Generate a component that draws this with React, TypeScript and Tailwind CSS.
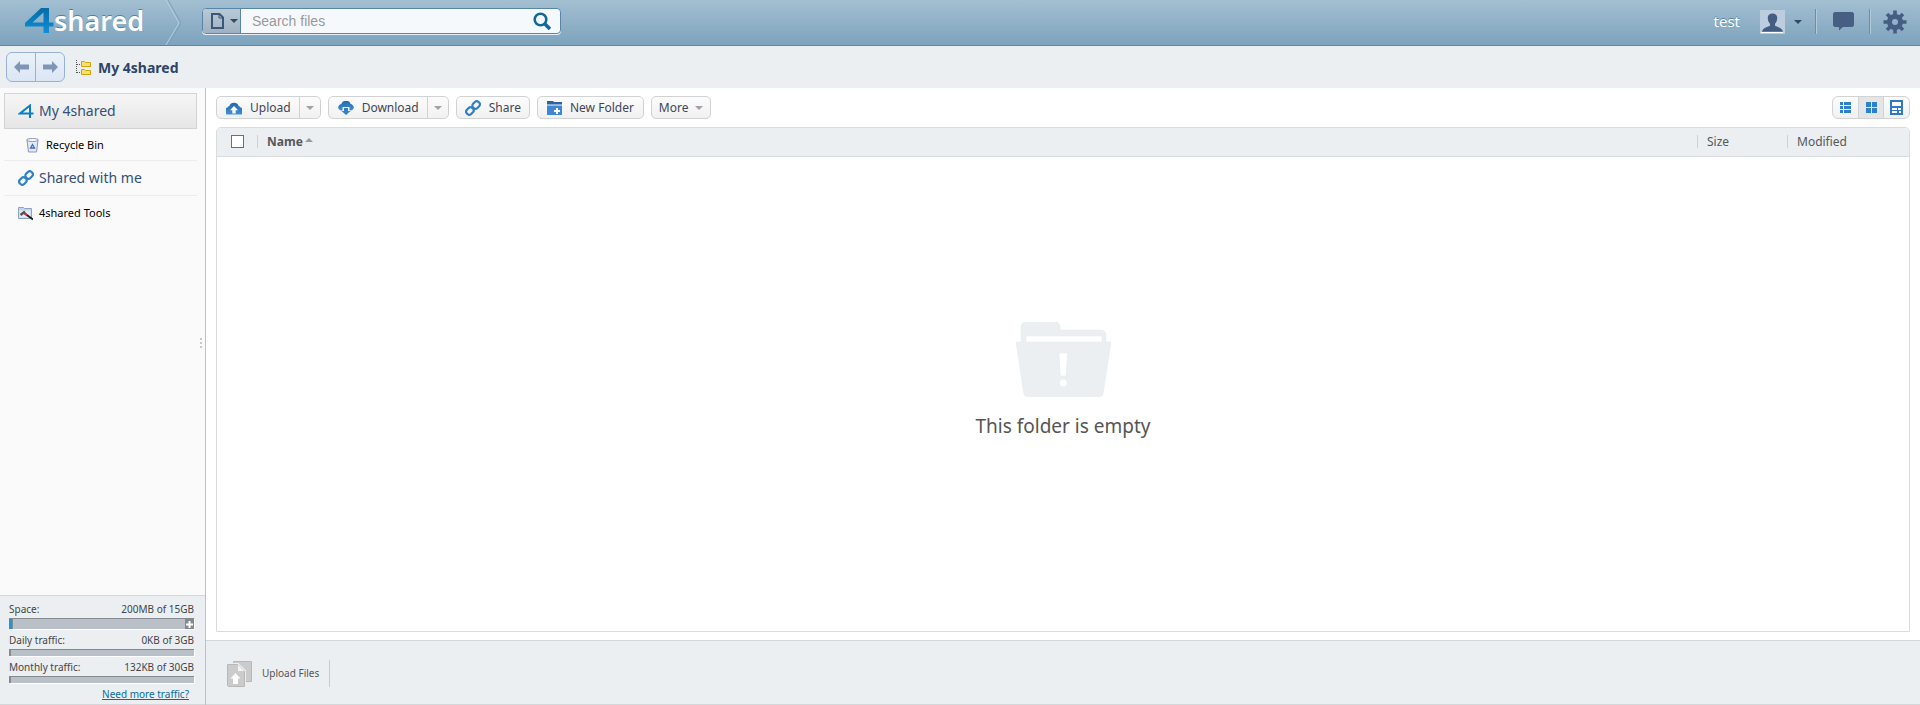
import React from "react";

const sans = "font-['Noto_Sans',sans-serif]";

function Caret({ className }: { className: string }) {
  return (
    <svg viewBox="0 0 8 4" className={className} fill="currentColor" aria-hidden="true">
      <path d="M0 0h8L4 4z" />
    </svg>
  );
}

function LinkIcon({ className }: { className: string }) {
  return (
    <svg viewBox="0 0 16 16" className={className} fill="none" stroke="#2f80c8" strokeWidth="2.200" aria-hidden="true">
      <rect x="7.300" y="2" width="7.600" height="6" rx="2.600" transform="rotate(-45 11.100 5)" />
      <rect x="1.100" y="8" width="7.600" height="6" rx="2.600" transform="rotate(-45 4.900 11)" />
    </svg>
  );
}

function CloudIcon({ down }: { down?: boolean }) {
  return (
    <svg viewBox="0 0 16 14" className="h-3.5 w-4" aria-hidden="true">
      <defs>
        <linearGradient id="cloud" x2="0" y2="1">
          <stop stopColor="#2568a8" />
          <stop offset="1" stopColor="#3d90dc" />
        </linearGradient>
      </defs>
      {down ? (
        <>
          <path fill="url(#cloud)" d="M3 9.500A3 3 0 0 1 1 4.500 2.500 2.500 0 0 1 3.300 3 5 5 0 0 1 12.700 3 2.500 2.500 0 0 1 15 4.500 3 3 0 0 1 13 9.500h-1.500V6h-7v3.500z" />
          <path fill="#3380c8" d="M6 7h4v3h2.500L8 14l-4.500-4H6z" />
        </>
      ) : (
        <>
          <path fill="url(#cloud)" d="M2.500 13.500A3.500 3.500 0 0 1 1.500 6.500 3 3 0 0 1 3.300 5 5 5 0 0 1 12.700 5a3 3 0 0 1 1.800 1.500 3.500 3.500 0 0 1-1 7z" />
          <path fill="#fff" d="m8 5 4 4.200H9.700v3.300H6.300V9.200H4z" />
        </>
      )}
    </svg>
  );
}

function NewFolderIcon() {
  return (
    <svg viewBox="0 0 15 14" className="h-3.5 w-[15px]" aria-hidden="true">
      <path fill="#2b63a3" d="M0 0h6l1 1h8v2.500H0z" />
      <path fill="#3f87d4" d="M0 4.500h15V14H0z" />
      <path fill="#fff" d="M9 7h2v2h2v2h-2v2H9v-2H7V9h2z" />
    </svg>
  );
}

const btn = "flex h-[23px] items-center rounded-[5px] border border-[#d0d2d4] bg-linear-to-b from-[#fcfcfc] to-[#f1f1f2] text-xs text-[#3c4658]";

function SplitButton({ label, icon }: { label: string; icon: React.ReactNode }) {
  return (
    <div className={btn}>
      <button className="flex h-full items-center gap-2 pr-2 pl-[9px]">
        {icon}
        {label}
      </button>
      <button aria-label={`${label} options`} className="flex h-full w-[21px] items-center justify-center border-l border-[#d0d2d4] text-[#a0a2a4]">
        <Caret className="h-1 w-2" />
      </button>
    </div>
  );
}

function Header() {
  return (
    <header className="flex h-[46px] shrink-0 items-stretch border-b border-[#5c86a6] bg-linear-to-b from-[#a3bfd2] to-[#7da3bd]">
      <a href="#" aria-label="4shared home" className="flex w-[165px] items-center pl-[25px] text-white">
        <svg viewBox="0 0 29 25" className="mb-1 h-[25px] w-[29px] shrink-0" aria-hidden="true">
          <defs>
            <linearGradient id="logo" x2="0" y2="1">
              <stop stopColor="#066ba8" />
              <stop offset="1" stopColor="#0f8fd6" />
            </linearGradient>
          </defs>
          <path fill="url(#logo)" fillRule="evenodd" d="M16 0h8v14.500h4.500v4H24V25h-5.500v-6.500H0V15zM18.500 4.500L7.500 14.500h11z" />
        </svg>
        <span className="mb-1 text-[27px] leading-8 font-semibold [text-shadow:0_-1px_0_#4f7fa3]">shared</span>
      </a>
      <svg viewBox="0 0 16 45" className="h-[45px] w-4" fill="none" aria-hidden="true">
        <path d="M1 0l13 23L1 45" stroke="#b7cedd" />
        <path d="M3 0l13 23L3 45" stroke="#7c9fb9" />
      </svg>
      <form className="mt-2 ml-[21px] flex h-[26px] w-[359px] overflow-hidden rounded border border-[#5886a8] bg-[#f6f9fc] shadow-[0_1px_0_#e8f1f7]">
        <button type="button" aria-label="File type" className="flex w-[38px] shrink-0 items-center gap-1.5 border-r border-[#5886a8] bg-linear-to-b from-[#b9cad7] to-[#9fb1c2] pl-2 text-[#34486a]">
          <svg viewBox="0 0 13 16" className="h-4 w-[13px]" fill="none" stroke="#3f5578" strokeWidth="2" aria-hidden="true">
            <path d="M1 1h7.500L12 4.500V15H1z" />
            <path d="M8 1v4h4" strokeWidth="1" />
          </svg>
          <Caret className="h-1 w-2" />
        </button>
        <input aria-label="Search files" placeholder="Search files" className="min-w-0 flex-1 bg-transparent pl-[11px] font-['Liberation_Sans',sans-serif] text-sm text-[#444] outline-none placeholder:text-[#999]" />
        <button aria-label="Search" className="flex w-9 items-center justify-center">
          <svg viewBox="0 0 18 18" className="size-[18px]" fill="none" stroke="#14699c" aria-hidden="true">
            <circle cx="7.500" cy="7.500" r="5.800" strokeWidth="2.600" />
            <path d="m12 12 5 5" strokeWidth="3.600" />
          </svg>
        </button>
      </form>
      <div className="ml-auto flex items-center pb-0.5 text-[#34486a]">
        <a href="#" className="mr-5 text-[15px] text-white [text-shadow:0_-1px_0_#5c86a6]">test</a>
        <button aria-label="Account" className="flex items-center gap-[9px]">
          <svg viewBox="0 0 25 24" className="h-6 w-[25px]" aria-hidden="true">
            <path fill="#bccddd" d="M0 0h25v24H0z" />
            <path fill="#fff" d="M1 22h22v1H1z" />
            <path fill="#455d82" d="M12.500 3.500c3.300 0 5 2 4.700 5-.2 2.500-1 4-2.200 5.300v2c3 1.500 7.200 2 8 6H2c.8-4 5-4.500 8-6v-2c-1.200-1.300-2-2.800-2.200-5.300-.3-3 1.400-5 4.700-5z" />
          </svg>
          <Caret className="h-1 w-2" />
        </button>
        <div className="mr-4 ml-[13px] h-[25px] w-0.5 border-l border-[#6890ad] bg-[#b2cbdb]" />
        <button aria-label="Messages">
          <svg viewBox="0 0 21 19" className="h-[19px] w-[21px]" aria-hidden="true">
            <path fill="#485f84" d="M1.500 0h18L21 1.500v12L19.500 15H10l-4 3.500V15H1.500L0 13.500v-12z" />
          </svg>
        </button>
        <div className="mr-3 ml-[15px] h-[25px] w-0.5 border-l border-[#6890ad] bg-[#b2cbdb]" />
        <button aria-label="Settings" className="mr-[13px]">
          <svg viewBox="-12 -12 24 24" className="size-6" stroke="#455d82" fill="none" aria-hidden="true">
            <circle r="5.500" strokeWidth="5" />
            <path strokeWidth="3.600" d="M0-7v-4.500M0 7v4.500M-7 0h-4.500M7 0h4.500M-5-5l-3-3M5 5l3 3M5-5l3-3M-5 5l-3 3" />
          </svg>
        </button>
      </div>
    </header>
  );
}

function Breadcrumb() {
  return (
    <div className="flex h-[42px] shrink-0 items-center bg-[#ebeff2] pl-1.5">
      <div className="flex h-[30px] w-[59px] rounded-md border border-[#96b2d8] bg-linear-to-b from-[#ebf1f8] to-[#dbe6f5] text-[#7f95b5]">
        {["Back", "Forward"].map((name, i) => (
          <button key={name} aria-label={name} className={i ? "flex flex-1 items-center justify-center border-l border-[#96b2d8]" : "flex flex-1 items-center justify-center"}>
            <svg viewBox="0 0 15 12" className={i ? "h-3 w-[15px] -scale-x-100" : "h-3 w-[15px]"} fill="currentColor" aria-hidden="true">
              <path d="M0 6l6-6v3.500h9v5H6V12z" />
            </svg>
          </button>
        ))}
      </div>
      <svg viewBox="0 0 15 16" className="mt-0.5 ml-[11px] h-4 w-[15px]" aria-hidden="true">
        <path d="M.5 0v13M1 4.500h4M1 12.500h4" stroke="#555" strokeDasharray="1 1" fill="none" />
        <path d="M5.500 1.500h3l1 1h5v4h-9zM5.500 9.500h3l1 1h5v4h-9z" fill="#f7df77" stroke="#d0a500" />
      </svg>
      <h1 className="mt-0.5 ml-[7px] text-sm font-bold text-[#2d4466]">My 4shared</h1>
    </div>
  );
}

function Quota({ label, value, fill, large }: { label: string; value: string; fill: string; large?: boolean }) {
  return (
    <div>
      <div className="flex h-[18px] items-center justify-between text-[10px] text-[#444]">
        <span>{label}</span>
        <span>{value}</span>
      </div>
      <div className={large ? "flex h-[11px] justify-between border-t border-[#858990] bg-[#bac0c8] shadow-[1px_1px_0_#fff]" : "h-[7px] border-t border-[#858990] bg-[#bac0c8] shadow-[1px_1px_0_#fff]"}>
        <div className={fill} />
        {large && (
          <button aria-label="Get more space" className="flex w-[9px] items-center justify-center bg-[#858990]">
            <svg viewBox="0 0 7 7" className="size-[7px] shrink-0" stroke="#fff" strokeWidth="2" aria-hidden="true">
              <path d="M3.500 0v7M0 3.500h7" />
            </svg>
          </button>
        )}
      </div>
    </div>
  );
}

function Sidebar() {
  return (
    <aside className="flex w-[206px] shrink-0 flex-col border-r border-[#b4c3d8] bg-[#fafafa]">
      <nav className="flex flex-col pt-[5px] pr-2 pl-1">
        <a href="#" className="flex h-9 items-center gap-[5px] border border-[#d2d3d5] bg-linear-to-b from-[#f6f6f6] to-[#e6e6e6] pl-[13px] text-sm text-[#344f78]">
          <svg viewBox="0 0 16 14" className="h-3.5 w-4" fill="none" stroke="#0b7fc4" strokeWidth="2" aria-hidden="true">
            <path d="M15.500 9.500H2L12 1.500V14" />
          </svg>
          My 4shared
        </a>
        <a href="#" className="flex h-8 items-center gap-[7px] border-b border-[#ececec] pt-0.5 pl-[22px] text-[11px] text-black">
          <svg viewBox="0 0 13 15" className="h-[15px] w-[13px]" aria-hidden="true">
            <path d="M1 2.500h11L10.500 14h-8z" fill="#e4eaf5" stroke="#8b97b2" />
            <ellipse cx="6.500" cy="2" rx="6" ry="1.500" fill="#f8faff" stroke="#8b97b2" />
            <path d="M6.500 6.500l2 3.500h-4z" fill="none" stroke="#3d6ec8" strokeWidth="1.300" />
          </svg>
          Recycle Bin
        </a>
        <a href="#" className="flex h-[35px] items-center gap-[5px] border-b border-[#ececec] pl-3.5 text-sm text-[#344f78]">
          <LinkIcon className="size-4" />
          Shared with me
        </a>
        <a href="#" className="flex h-[34px] items-center gap-1.5 pl-3.5 text-[11px] text-black">
          <svg viewBox="0 0 15 15" className="size-[15px]" aria-hidden="true">
            <path d="M.5 1.500h5l1 1h7v10H.5z" fill="#c2d3ea" stroke="#8da3c0" />
            <path d="M1.500 4.500h11v7h-11z" fill="#e6edf7" />
            <path d="M6 7l9 6.500" stroke="#222" strokeWidth="2" />
            <path d="M6 7l3 2" stroke="#d33" strokeWidth="2" />
            <path d="M2.500 9l4.500-3.500" stroke="#555" strokeWidth="2.500" />
          </svg>
          4shared Tools
        </a>
      </nav>
      <div className="flex flex-1 items-center justify-end pr-[3px] pb-[140px]">
        <svg viewBox="0 0 2 10" className="h-2.5 w-0.5" fill="#c4c8cc" aria-hidden="true">
          <path d="M0 0h2v2H0zM0 4h2v2H0zM0 8h2v2H0z" />
        </svg>
      </div>
      <div className="flex flex-col gap-0.5 border-y border-[#d3d7da] bg-[#ebeff2] pt-1 pr-[11px] pl-[9px]">
        <Quota large label="Space:" value="200MB of 15GB" fill="w-1 bg-[#1d96e0] border-r border-[#858990]" />
        <Quota label="Daily traffic:" value="0KB of 3GB" fill="h-full w-0.5 bg-[#858990]" />
        <Quota label="Monthly traffic:" value="132KB of 30GB" fill="h-full w-0.5 bg-[#858990]" />
        <a href="#" className="mr-[5px] self-end text-[10px] leading-[19px] text-[#0a6c9e] underline">Need more traffic?</a>
      </div>
    </aside>
  );
}

function Toolbar() {
  return (
    <div className="flex items-center gap-[7px]">
      <SplitButton label="Upload" icon={<CloudIcon />} />
      <SplitButton label="Download" icon={<CloudIcon down />} />
      <button className={`${btn} gap-2 px-2`}>
        <LinkIcon className="size-4" />
        Share
      </button>
      <button className={`${btn} gap-2 px-[9px]`}>
        <NewFolderIcon />
        New Folder
      </button>
      <button className={`${btn} gap-1.5 px-[7px]`}>
        More
        <Caret className="h-1 w-2 text-[#a0a2a4]" />
      </button>
      <div className="ml-auto flex h-[23px] overflow-hidden rounded-[6px] border border-[#d0d2d4] bg-linear-to-b from-[#fcfcfc] to-[#f1f1f2]">
        <button aria-label="List view" className="flex w-[25px] items-center justify-center">
          <svg viewBox="0 0 11 11" className="size-[11px]" fill="#2f80cc" shapeRendering="crispEdges" aria-hidden="true">
            <path d="M0 0h3v3H0zM4 0h7v3H4zM0 4h3v3H0zM4 4h7v3H4zM0 8h3v3H0zM4 8h7v3H4z" />
          </svg>
        </button>
        <button aria-label="Grid view" aria-pressed="true" className="flex w-[26px] items-center justify-center border-x border-[#d0d2d4] bg-[#e4e5e7]">
          <svg viewBox="0 0 11 11" className="size-[11px]" fill="#2f80cc" aria-hidden="true">
            <path d="M0 0h5v5H0zM6 0h5v5H6zM0 6h5v5H0zM6 6h5v5H6z" />
          </svg>
        </button>
        <button aria-label="Detail view" className="flex w-[25px] items-center justify-center">
          <svg viewBox="0 0 13 15" className="h-[15px] w-[13px]" shapeRendering="crispEdges" aria-hidden="true">
            <path fill="#2f78c6" d="M0 0h13v15H0z" />
            <path fill="#fff" d="M2 2h9v4H2zM2 8h5v2H2zM2 11h5v2H2zM8 8h3v2H8zM9 11h2v2H9z" />
          </svg>
        </button>
      </div>
    </div>
  );
}

const divider = "border-l border-[#cdd1d4] pl-[9px] leading-[13px]";

function FileList() {
  return (
    <section className="mt-2 flex flex-1 flex-col overflow-hidden rounded-t-[5px] border border-[#d8dcdf] bg-white">
      <table className="w-full table-fixed text-left text-xs text-[#55585a]">
        <thead>
          <tr className="h-7 border-b border-[#d8dcdf] bg-[#ebeff2]">
            <th className="w-10 pl-3.5">
              <input type="checkbox" aria-label="Select all" className="block size-[13px] appearance-none border border-[#707070] bg-white" />
            </th>
            <th className="font-bold">
              <span className={`${divider} flex items-center gap-0.5`}>
                Name
                <Caret className="mb-1 h-1 w-2 rotate-180 text-[#999]" />
              </span>
            </th>
            <th className="w-[90px] font-normal"><span className={`${divider} block`}>Size</span></th>
            <th className="w-[122px] font-normal"><span className={`${divider} block`}>Modified</span></th>
          </tr>
        </thead>
      </table>
      <div className="flex flex-1 flex-col items-center justify-center pb-[25px]">
        <svg viewBox="0 0 95 75" className="h-[75px] w-[95px]" aria-hidden="true">
          <path fill="#ebeff2" stroke="#e3e8ec" strokeWidth=".5" fillRule="evenodd" d="M5 20V5a5 5 0 0 1 5-5h29a5 5 0 0 1 5 5v3h41a5 5 0 0 1 5 5v7h5l-8 52q-.5 2.500-3 2.500H11q-2.500 0-3-2.500L0 20zM10 14v6h76v-6zM43 31l1.300 23h5.900L51.500 31zM47.200 57a4 4 0 1 0 .1 0z" />
        </svg>
        <p className="mt-[15px] text-[19px] leading-7 text-[#555]">This folder is empty</p>
      </div>
    </section>
  );
}

export default function App() {
  return (
    <div className={`flex h-screen min-h-[500px] flex-col bg-white ${sans}`}>
      <Header />
      <Breadcrumb />
      <div className="flex min-h-0 flex-1">
        <Sidebar />
        <div className="flex min-w-0 flex-1 flex-col">
          <main className="flex flex-1 flex-col px-2.5 pt-2 pb-2">
            <Toolbar />
            <FileList />
          </main>
          <footer className="flex h-[65px] items-center border-y border-[#d3d7da] bg-[#ebeff2] pt-0.5 pl-5">
            <button className="flex h-[27px] items-center gap-2.5 border-r border-[#c8cccf] pr-2.5 text-[10px] text-[#555]">
              <svg viewBox="0 0 26 26" className="size-[26px]" aria-hidden="true">
                <path fill="#cbcbcb" stroke="#b8b8b8" d="M7.500.5h18v20h-18z" />
                <path fill="#cbcbcb" stroke="#ebeff2" strokeWidth="2" d="M1 3h11l7 7v16H1z" />
                <path fill="#cbcbcb" stroke="#b8b8b8" d="M1.500 3.500h10l7 7v15h-16l-1-1z" />
                <path fill="#f4f4f4" stroke="#b8b8b8" strokeWidth=".5" d="M11.500 3l7.500 7.500h-7.500z" />
                <path fill="#fff" d="M9.500 12l5 5.500H12V23H7v-5.500H4.500z" />
              </svg>
              Upload Files
            </button>
          </footer>
        </div>
      </div>
    </div>
  );
}
